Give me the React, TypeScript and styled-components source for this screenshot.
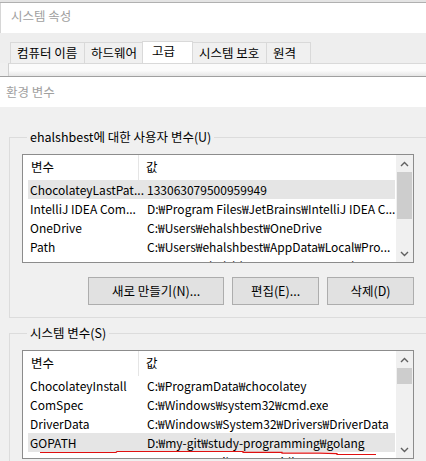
import React from "react";
import styled, {createGlobalStyle} from "styled-components";

const GlobalStyle = createGlobalStyle`
  html, body {
    margin: 0;
    padding: 0;
    background: #f0f0f0;
  }

  body {
    font-family: "Noto Sans CJK KR", "Noto Sans", sans-serif;
    font-size: 12.5px;
    color: #000;
  }
`;

interface VarRow {
  name: string;
  value: string;
  selected?: boolean;
}

const userVars: VarRow[] = [
  {name: "ChocolateyLastPat...", value: "133063079500959949", selected: true},
  {name: "IntelliJ IDEA Com...", value: "D:₩Program Files₩JetBrains₩IntelliJ IDEA C..."},
  {name: "OneDrive", value: "C:₩Users₩ehalshbest₩OneDrive"},
  {name: "Path", value: "C:₩Users₩ehalshbest₩AppData₩Local₩Pro..."},
  {name: "", value: "C:₩Users₩ehalshbest₩AppData₩Local₩Temp"},
];

const systemVars: VarRow[] = [
  {name: "ChocolateyInstall", value: "C:₩ProgramData₩chocolatey"},
  {name: "ComSpec", value: "C:₩Windows₩system32₩cmd.exe"},
  {name: "DriverData", value: "C:₩Windows₩System32₩Drivers₩DriverData"},
  {name: "GOPATH", value: "D:₩my-git₩study-programming₩golang", selected: true},
  {name: "JAVA_HOME", value: "C:₩Program Files₩Java₩jdk"},
];

const tabs = [
  {label: "컴퓨터 이름", width: 75},
  {label: "하드웨어", width: 59},
  {label: "고급", width: 51, active: true},
  {label: "시스템 보호", width: 75},
  {label: "원격", width: 45},
];

const Chevron: React.FC<{down?: boolean}> = ({down}) => (
  <svg width="9" height="6" viewBox="0 0 9 6">
    <polyline
      points={down ? "1,1 4.5,4.5 8,1" : "1,5 4.5,1.5 8,5"}
      fill="none"
      stroke="#606060"
      strokeWidth="1.4"
    />
  </svg>
);

const VarList: React.FC<{rows: VarRow[]; thumbHeight: number}> = ({rows, thumbHeight}) => (
  <ListBox>
    <ListContent>
      <HeaderRow>
        <HeaderName>변수</HeaderName>
        <HeaderValue>값</HeaderValue>
      </HeaderRow>
      {rows.map((row, i) => (
        <Row key={i} $selected={row.selected}>
          <NameCell>{row.name}</NameCell>
          <ValueCell>{row.value}</ValueCell>
        </Row>
      ))}
    </ListContent>
    <ScrollBar>
      <ArrowButton>
        <Chevron />
      </ArrowButton>
      <Track>
        <Thumb style={{height: thumbHeight}} />
      </Track>
      <ArrowButton>
        <Chevron down />
      </ArrowButton>
    </ScrollBar>
  </ListBox>
);

export default function App() {
  return (
    <>
      <GlobalStyle />
      <Screen>
        <PropsWindow>
          <TopEdge />
          <PropsTitle>시스템 속성</PropsTitle>
          <TabStrip>
            {tabs.map((tab) => (
              <Tab key={tab.label} $width={tab.width} $active={tab.active}>
                {tab.label}
              </Tab>
            ))}
          </TabStrip>
          <TabPanelEdge />
        </PropsWindow>

        <EnvWindow>
          <EnvTitle>환경 변수</EnvTitle>
          <EnvBody>
            <Group>
              <GroupLabel>ehalshbest에 대한 사용자 변수(U)</GroupLabel>
              <VarList rows={userVars} thumbHeight={47} />
              <ButtonRow>
                <Button $width={136}>새로 만들기(N)...</Button>
                <Button $width={87}>편집(E)...</Button>
                <Button $width={87}>삭제(D)</Button>
              </ButtonRow>
            </Group>

            <Group $second>
              <GroupLabel>시스템 변수(S)</GroupLabel>
              <VarList rows={systemVars} thumbHeight={16} />
            </Group>
          </EnvBody>
        </EnvWindow>

        <Scribble width="426" height="12" viewBox="0 446 426 12">
          <polyline
            points="40,452.5 116,452.5 117,451.5 243,451.5 243,452.3 282,452.3 282,453.2 320,453.2 337,453.6 337,454.5 376,454.5"
            fill="none"
            stroke="#e01010"
            strokeWidth="1.2"
          />
        </Scribble>
      </Screen>
    </>
  );
}

const Screen = styled.div`
  position: relative;
  width: 426px;
  height: 461px;
  overflow: hidden;
  background: #f0f0f0;
`;

const PropsWindow = styled.div`
  display: flex;
  flex-direction: column;
  border-bottom: 1px solid #a0a0a0;
`;

const TopEdge = styled.div`
  height: 2px;
  background: #e4e4e4;
  border-bottom: 1px solid #b0b0b0;
`;

const PropsTitle = styled.div`
  height: 30px;
  line-height: 26px;
  padding-left: 10px;
  background: #fff;
  border-left: 1px solid #d6d6d6;
  color: #a0a0a0;
`;

const TabStrip = styled.div`
  display: flex;
  align-items: flex-end;
  height: 30px;
  padding-left: 10px;
  background: #eeeeee;
`;

const Tab = styled.div<{$width: number; $active?: boolean}>`
  box-sizing: border-box;
  width: ${(p) => p.$width}px;
  height: ${(p) => (p.$active ? 22 : 21)}px;
  line-height: ${(p) => (p.$active ? 18 : 19)}px;
  padding-left: ${(p) => (p.$active ? 9 : 6)}px;
  background: ${(p) => (p.$active ? "#fff" : "#f0f0f0")};
  border: 1px solid #d9d9d9;
  border-bottom: none;
  margin-right: -1px;
  white-space: nowrap;
`;

const TabPanelEdge = styled.div`
  height: 12px;
  margin-left: 8px;
  background: linear-gradient(#fbfbfb 55%, #e6e6e6);
  border-top: 1px solid #d9d9d9;
  border-left: 1px solid #d0d0d0;
`;

const EnvWindow = styled.div`
  display: flex;
  flex-direction: column;
`;

const EnvTitle = styled.div`
  height: 30px;
  line-height: 30px;
  padding-left: 6px;
  background: #fff;
  color: #a0a0a0;
`;

const EnvBody = styled.div`
  display: flex;
  flex-direction: column;
  background: #f0f0f0;
`;

const Group = styled.fieldset<{$second?: boolean}>`
  box-sizing: border-box;
  width: 440px;
  margin: ${(p) => (p.$second ? 7 : 22)}px 0 0 9px;
  padding: 0 0 12px 12px;
  border: 1px solid #dcdcdc;
  min-width: 0;
`;

const GroupLabel = styled.legend`
  margin-left: 5px;
  padding: 0 3px;
  line-height: 16px;
  white-space: nowrap;
`;

const ListBox = styled.div`
  box-sizing: border-box;
  display: flex;
  width: 392px;
  height: 109px;
  margin-top: 9px;
  background: #fff;
  border: 1px solid #8c8c8c;
  overflow: hidden;
  font-size: 12px;
`;

const ListContent = styled.div`
  flex: 1;
  min-width: 0;
  padding-left: 5px;
  margin-right: 1px;
  overflow: hidden;
`;

const HeaderRow = styled.div`
  display: flex;
  height: 25px;
  line-height: 24px;
  font-size: 12.5px;
`;

const HeaderName = styled.div`
  box-sizing: border-box;
  width: 111px;
  padding-left: 3px;
  border-right: 1px solid #e5e5e5;
`;

const HeaderValue = styled.div`
  padding-left: 7px;
`;

const Row = styled.div<{$selected?: boolean}>`
  display: flex;
  height: 19px;
  line-height: 19px;
  background: ${(p) => (p.$selected ? "#e5e5e5" : "transparent")};
  white-space: nowrap;
`;

const NameCell = styled.div`
  box-sizing: border-box;
  width: 112px;
  flex-shrink: 0;
  padding-left: 2px;
`;

const ValueCell = styled.div`
  padding-left: 7px;
  overflow: hidden;
`;

const ScrollBar = styled.div`
  display: flex;
  flex-direction: column;
  width: 17px;
  flex-shrink: 0;
  background: #f0f0f0;
`;

const ArrowButton = styled.div`
  display: flex;
  align-items: center;
  justify-content: center;
  height: 17px;
  flex-shrink: 0;
`;

const Track = styled.div`
  flex: 1;
  display: flex;
  flex-direction: column;
  align-items: center;
`;

const Thumb = styled.div`
  width: 15px;
  background: #cdcdcd;
`;

const ButtonRow = styled.div`
  display: flex;
  gap: 8px;
  width: 392px;
  justify-content: flex-end;
  margin-top: 14px;
`;

const Button = styled.div<{$width: number}>`
  box-sizing: border-box;
  width: ${(p) => p.$width}px;
  height: 28px;
  line-height: 26px;
  text-align: center;
  background: #e1e1e1;
  border: 1px solid #adadad;
`;

const Scribble = styled.svg`
  position: absolute;
  left: 0;
  top: 446px;
`;
